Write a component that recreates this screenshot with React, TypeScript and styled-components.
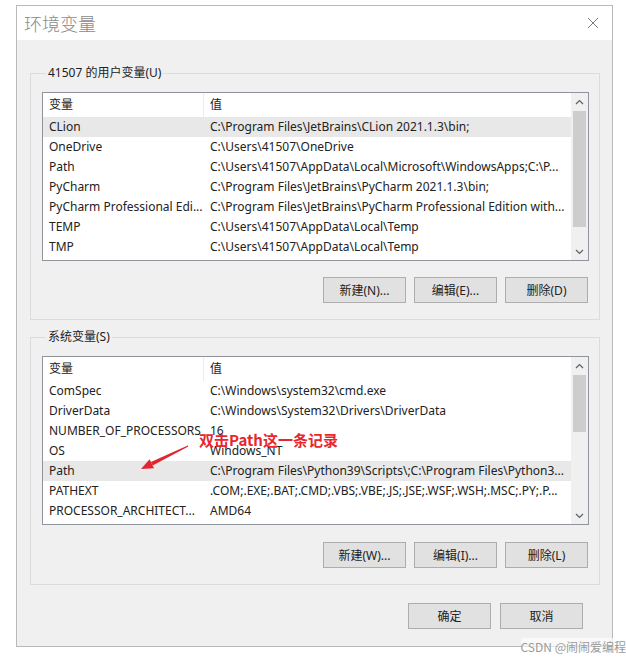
import React from "react";
import styled, { createGlobalStyle } from "styled-components";

const GlobalStyle = createGlobalStyle`
  html, body { margin: 0; padding: 0; background: #ffffff; }
  body {
    font-family: "Noto Sans", "Noto Sans CJK SC", sans-serif;
    font-size: 12px;
    color: #222;
  }
  * { box-sizing: border-box; }
`;

const Page = styled.div`
  position: relative;
  width: 626px;
  height: 659px;
  padding: 5px 0 0 16px;
  overflow: hidden;
`;

const Dialog = styled.div`
  width: 597px;
  border: 1px solid #b9b9b9;
  background: #f0f0f0;
  display: flex;
  flex-direction: column;
`;

const TitleBar = styled.div`
  height: 34px;
  background: #ffffff;
  display: flex;
  align-items: center;
  justify-content: space-between;
  padding: 0 13px 0 7px;
`;

const Title = styled.div`
  font-family: "Noto Sans CJK SC", sans-serif;
  font-size: 18px;
  font-weight: 300;
  color: #8a8a8a;
  line-height: 24px;
`;

const Body = styled.div`
  display: flex;
  flex-direction: column;
  padding: 25px 12px 17px 13px;
`;

const Group = styled.fieldset<{ $gap?: number }>`
  margin: ${(p) => p.$gap ?? 0}px 0 0 0;
  padding: 11px 10px 16px 11px;
  border: 1px solid #dcdcdc;
  min-width: 0;
`;

const Legend = styled.legend`
  padding: 0 2px;
  margin-left: 4px;
  font-size: 12px;
  line-height: 16px;
  color: #222;
`;

const List = styled.div`
  position: relative;
  height: 169px;
  border: 1px solid #8f949b;
  background: #ffffff;
  display: grid;
  grid-template-columns: 1fr 17px;
`;

const Rows = styled.div`
  display: flex;
  flex-direction: column;
  overflow: hidden;
`;

const Row = styled.div<{ $selected?: boolean; $header?: boolean }>`
  display: grid;
  grid-template-columns: 161px 1fr;
  height: ${(p) => (p.$header ? 24 : 20)}px;
  align-items: center;
  background: ${(p) => (p.$selected ? "#e8e8e8" : "#ffffff")};
`;

const Cell = styled.div<{ $divider?: boolean }>`
  padding-left: ${(p) => (p.$divider ? 6 : 6)}px;
  white-space: nowrap;
  overflow: hidden;
  line-height: 20px;
  height: 100%;
  display: flex;
  align-items: center;
  border-right: ${(p) => (p.$divider ? "1px solid #ececec" : "none")};
`;

const ScrollBar = styled.div`
  display: flex;
  flex-direction: column;
  background: #f0f0f0;
`;

const ScrollButton = styled.div`
  height: 17px;
  display: flex;
  align-items: center;
  justify-content: center;
`;

const Track = styled.div`
  flex: 1;
  padding-top: 1px;
`;

const Thumb = styled.div`
  margin: 0 2px;
  background: #cdcdcd;
`;

const ButtonRow = styled.div<{ $top: number; $right: number; $gap: number }>`
  display: flex;
  justify-content: flex-end;
  gap: ${(p) => p.$gap}px;
  margin-top: ${(p) => p.$top}px;
  margin-right: ${(p) => p.$right}px;
`;

const Button = styled.button`
  width: 83px;
  height: 26px;
  border: 1px solid #adadad;
  background: #e1e1e1;
  font-family: "Noto Sans", "Noto Sans CJK SC", sans-serif;
  font-size: 12px;
  color: #222;
  padding: 0;
`;

const Note = styled.div`
  position: absolute;
  left: 156px;
  top: 73px;
  font-family: "Noto Sans CJK SC", sans-serif;
  font-weight: 700;
  font-size: 15px;
  line-height: 20px;
  color: #e8262d;
  white-space: nowrap;
`;

const ArrowSvg = styled.svg`
  position: absolute;
  left: 95px;
  top: 85px;
`;

const Watermark = styled.div`
  position: absolute;
  right: 0;
  top: 638px;
  font-family: "Noto Sans CJK SC", sans-serif;
  font-size: 12px;
  line-height: 18px;
  color: #9a9a9a;
  background: rgba(255, 255, 255, 0.6);
  white-space: nowrap;
`;

type Item = { name: string; value: string; selected?: boolean };

const userVars: Item[] = [
  { name: "CLion", value: "C:\\Program Files\\JetBrains\\CLion 2021.1.3\\bin;", selected: true },
  { name: "OneDrive", value: "C:\\Users\\41507\\OneDrive" },
  { name: "Path", value: "C:\\Users\\41507\\AppData\\Local\\Microsoft\\WindowsApps;C:\\P..." },
  { name: "PyCharm", value: "C:\\Program Files\\JetBrains\\PyCharm 2021.1.3\\bin;" },
  { name: "PyCharm Professional Edi...", value: "C:\\Program Files\\JetBrains\\PyCharm Professional Edition with..." },
  { name: "TEMP", value: "C:\\Users\\41507\\AppData\\Local\\Temp" },
  { name: "TMP", value: "C:\\Users\\41507\\AppData\\Local\\Temp" },
];

const sysVars: Item[] = [
  { name: "ComSpec", value: "C:\\Windows\\system32\\cmd.exe" },
  { name: "DriverData", value: "C:\\Windows\\System32\\Drivers\\DriverData" },
  { name: "NUMBER_OF_PROCESSORS", value: "16" },
  { name: "OS", value: "Windows_NT" },
  { name: "Path", value: "C:\\Program Files\\Python39\\Scripts\\;C:\\Program Files\\Python3...", selected: true },
  { name: "PATHEXT", value: ".COM;.EXE;.BAT;.CMD;.VBS;.VBE;.JS;.JSE;.WSF;.WSH;.MSC;.PY;.P..." },
  { name: "PROCESSOR_ARCHITECT...", value: "AMD64" },
];

const Chevron = ({ up }: { up?: boolean }) => (
  <svg width="9" height="6" viewBox="0 0 9 6">
    <polyline
      points={up ? "1,5 4.5,1.5 8,5" : "1,1 4.5,4.5 8,1"}
      fill="none"
      stroke="#606060"
      strokeWidth="1.2"
    />
  </svg>
);

const VarList = ({
  items,
  thumbHeight,
  children,
}: {
  items: Item[];
  thumbHeight: number;
  children?: React.ReactNode;
}) => (
  <List>
    <Rows>
      <Row $header>
        <Cell $divider>变量</Cell>
        <Cell>值</Cell>
      </Row>
      {items.map((it, i) => (
        <Row key={i} $selected={it.selected}>
          <Cell>{it.name}</Cell>
          <Cell>{it.value}</Cell>
        </Row>
      ))}
    </Rows>
    <ScrollBar>
      <ScrollButton>
        <Chevron up />
      </ScrollButton>
      <Track>
        <Thumb style={{ height: thumbHeight }} />
      </Track>
      <ScrollButton>
        <Chevron />
      </ScrollButton>
    </ScrollBar>
    {children}
  </List>
);

export default function App() {
  return (
    <>
      <GlobalStyle />
      <Page>
        <Dialog>
          <TitleBar>
            <Title>环境变量</Title>
            <svg width="12" height="12" viewBox="0 0 12 12">
              <path d="M1 1 L11 11 M11 1 L1 11" stroke="#7a7a7a" strokeWidth="1" fill="none" />
            </svg>
          </TitleBar>
          <Body>
            <Group>
              <Legend>41507 的用户变量(U)</Legend>
              <VarList items={userVars} thumbHeight={116} />
              <ButtonRow $top={16} $right={1} $gap={8}>
                <Button>新建(N)...</Button>
                <Button>编辑(E)...</Button>
                <Button>删除(D)</Button>
              </ButtonRow>
            </Group>
            <Group $gap={9}>
              <Legend>系统变量(S)</Legend>
              <VarList items={sysVars} thumbHeight={57}>
                <Note>双击Path这一条记录</Note>
                <ArrowSvg width="56" height="32" viewBox="0 0 56 32">
                  <polygon points="50.3,4.5 49.7,3.5 12.9,19.9 14.7,23.5" fill="#e3262e" />
                  <polygon points="3,27 16,26.2 11.6,17.2" fill="#e3262e" />
                </ArrowSvg>
              </VarList>
              <ButtonRow $top={17} $right={1} $gap={8}>
                <Button>新建(W)...</Button>
                <Button>编辑(I)...</Button>
                <Button>删除(L)</Button>
              </ButtonRow>
            </Group>
            <ButtonRow $top={18} $right={17} $gap={9}>
              <Button>确定</Button>
              <Button>取消</Button>
            </ButtonRow>
          </Body>
        </Dialog>
        <Watermark>CSDN @闹闹爱编程</Watermark>
      </Page>
    </>
  );
}
